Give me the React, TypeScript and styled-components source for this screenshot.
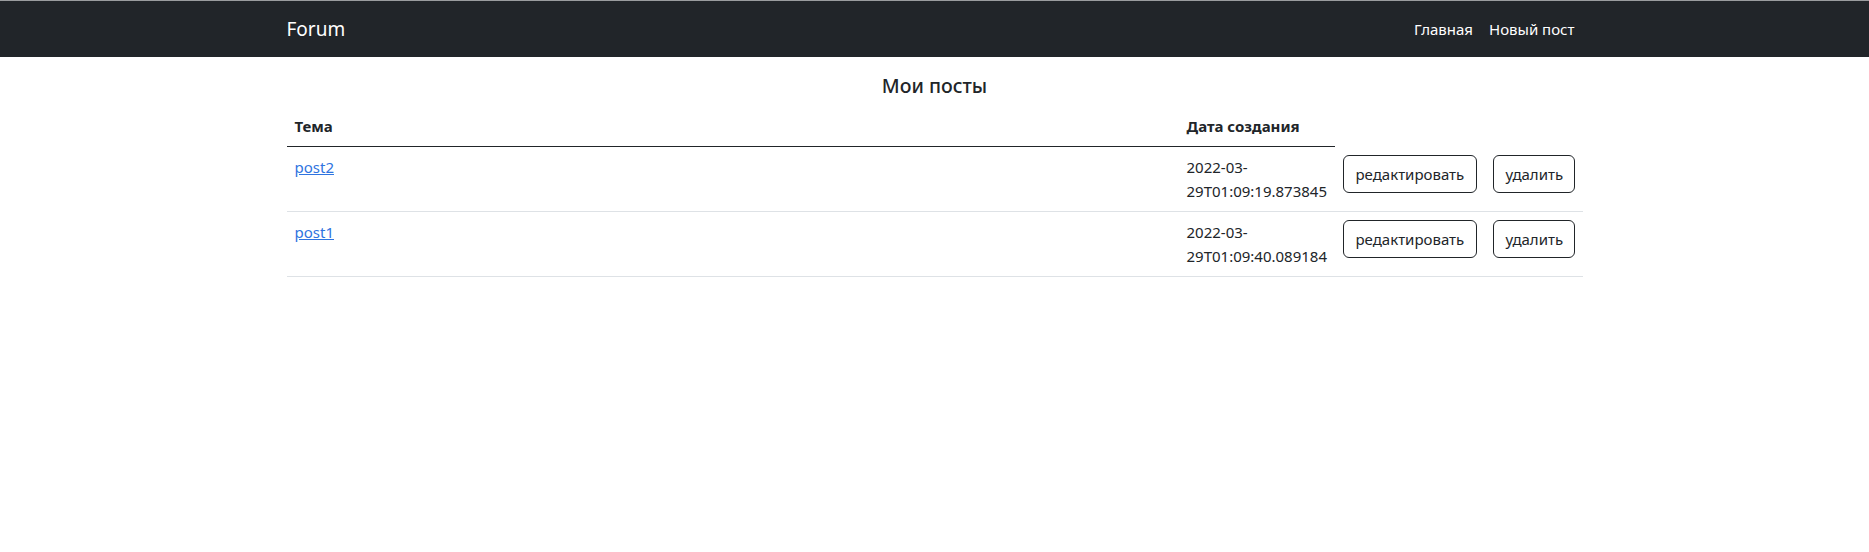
import styled, { createGlobalStyle } from "styled-components";

const GlobalStyle = createGlobalStyle`
  * {
    box-sizing: border-box;
  }
  body {
    margin: 0;
    background: #fff;
    color: #212529;
    font-family: "Segoe UI", "Noto Sans", "Open Sans", sans-serif;
    font-size: 15px;
    line-height: 24px;
  }
`;

const posts = [
  { id: 2, title: "post2", date: "2022-03-", time: "29T01:09:19.873845" },
  { id: 1, title: "post1", date: "2022-03-", time: "29T01:09:40.089184" },
];

export default function App() {
  return (
    <>
      <GlobalStyle />
      <Navbar>
        <Container>
          <Brand href="#">Forum</Brand>
          <NavList>
            <NavLink href="#">Главная</NavLink>
            <NavLink href="#">Новый пост</NavLink>
          </NavList>
        </Container>
      </Navbar>

      <Main>
        <Title>Мои посты</Title>
        <Table>
          <HeadRow>
            <HeadCell>Тема</HeadCell>
            <HeadCell>Дата создания</HeadCell>
          </HeadRow>
          {posts.map((post) => (
            <BodyRow key={post.id}>
              <Cell>
                <PostLink href="#">{post.title}</PostLink>
              </Cell>
              <Cell>
                {post.date}
                <br />
                {post.time}
              </Cell>
              <Cell>
                <Button>редактировать</Button>
              </Cell>
              <Cell>
                <Button>удалить</Button>
              </Cell>
            </BodyRow>
          ))}
        </Table>
      </Main>
    </>
  );
}

const Navbar = styled.nav`
  background: #212529;
  border-top: 1px solid #9a9c9e;
  padding: 8px 0;
`;

const Container = styled.div`
  width: 1320px;
  margin: 0 auto;
  padding: 0 12px;
  display: flex;
  align-items: center;
  justify-content: space-between;
`;

const Brand = styled.a`
  color: #fff;
  font-size: 19px;
  line-height: 30px;
  padding: 5px 0;
  text-decoration: none;
`;

const NavList = styled.div`
  display: flex;
  align-items: center;
`;

const NavLink = styled.a`
  color: #fff;
  text-decoration: none;
  padding: 8px;
  line-height: 24px;
`;

const Main = styled.main`
  width: 1320px;
  margin: 0 auto;
  padding: 0 12px;
`;

const Title = styled.h5`
  margin: 17px 0 8px;
  text-align: center;
  font-size: 19.5px;
  font-weight: 500;
  line-height: 24px;
`;

const Table = styled.div`
  width: 100%;
  margin-bottom: 16px;
`;

const HeadRow = styled.div`
  display: grid;
  grid-template-columns: 892px 156px;
`;

const HeadCell = styled.div`
  padding: 8px;
  font-weight: 700;
  border-bottom: 1px solid #212529;
`;

const BodyRow = styled.div`
  display: grid;
  grid-template-columns: 892px 156px 150px 98px;
  border-bottom: 1px solid #dee2e6;
`;

const Cell = styled.div`
  padding: 8px;
  white-space: nowrap;
`;

const PostLink = styled.a`
  color: #2f74e0;
  text-decoration: underline;
`;

const Button = styled.button`
  font-family: inherit;
  font-size: 15px;
  line-height: 24px;
  color: #212529;
  background: transparent;
  border: 1px solid #212529;
  border-radius: 6px;
  padding: 6px 12px;
  cursor: pointer;
  width: 100%;
`;
